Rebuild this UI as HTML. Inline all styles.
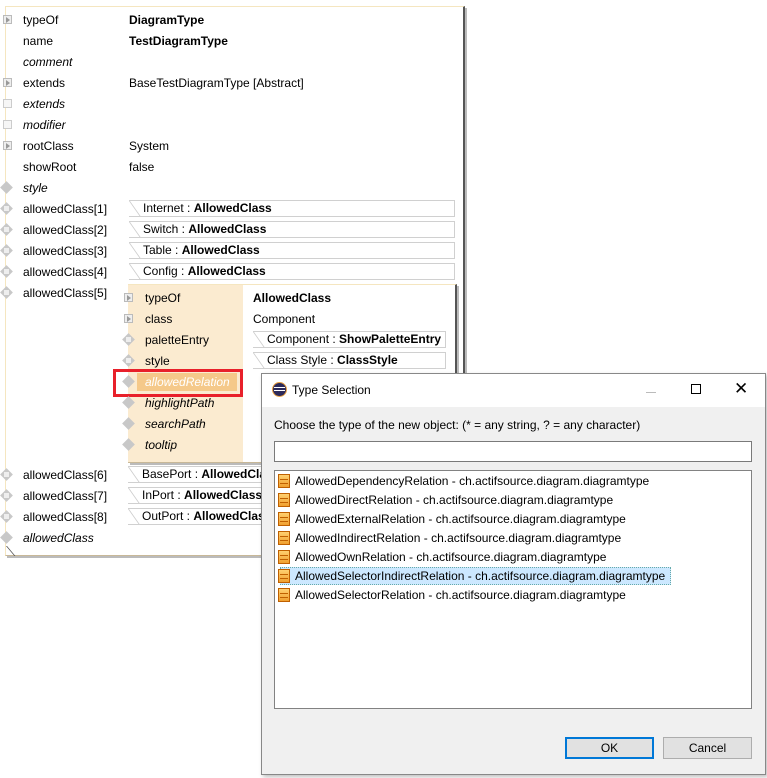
<!DOCTYPE html>
<html><head><meta charset="utf-8"><style>
*{margin:0;padding:0;box-sizing:border-box}
body{width:767px;height:778px;background:#fff;position:relative;overflow:hidden;font-family:"Liberation Sans",sans-serif;font-size:12px;color:#000}
.a{position:absolute;white-space:nowrap;line-height:16px}
.i{font-style:italic}
.b{font-weight:bold}
.ex{position:absolute;width:9px;height:9px;border:1px solid #bbb;background:#eee}
.ex:after{content:"";position:absolute;left:2px;top:1px;border-left:4px solid #999;border-top:3px solid transparent;border-bottom:3px solid transparent}
.sq{position:absolute;width:9px;height:9px;border:1px solid #ccc;background:#f6f6f6}
.dm{position:absolute;width:9px;height:9px;background:#c8c8c8;transform:rotate(45deg)}
.dp:after{content:"";position:absolute;left:2px;top:2px;width:5px;height:5px;background:#eee;transform:rotate(-45deg)}
.bx{position:absolute;height:17px;border:1px solid #d0d0d0;border-left:none;background:#fff;padding-left:14px;line-height:15px;white-space:nowrap;overflow:hidden}
.bx:before{content:"";position:absolute;left:0;top:0;width:10px;height:15px;border-left:1px solid #ccc;transform:skewX(35deg);transform-origin:top left}
.li{position:absolute;left:20px;height:18px;line-height:18px;white-space:nowrap}
.ci{position:absolute;left:-17px;top:2px;width:12px;height:14px;border:1px solid #c06000;background:linear-gradient(#ffd070,#f0a030)}
.ci:before{content:"";position:absolute;left:1px;top:4px;width:8px;height:1px;background:#c06000;box-shadow:0 4px 0 #c06000}
</style></head><body>
<!-- main panel -->
<div style="position:absolute;left:5px;top:6px;width:460px;height:550px;border:1px solid #f5e6c0;border-right:2px solid #555;border-bottom:1px solid #c8b898;box-shadow:2px 2px 0 #bbb"></div>
<div style="position:absolute;left:6px;top:546px;width:10px;height:10px;border-left:1px solid #555;transform:skewX(40deg);transform-origin:top left"></div>

<div class="ex" style="left:3px;top:15px"></div><div class="a" style="left:23px;top:12px">typeOf</div><div class="a b" style="left:129px;top:12px">DiagramType</div>
<div class="a" style="left:23px;top:33px">name</div><div class="a b" style="left:129px;top:33px">TestDiagramType</div>
<div class="a i" style="left:23px;top:54px">comment</div>
<div class="ex" style="left:3px;top:78px"></div><div class="a" style="left:23px;top:75px">extends</div><div class="a" style="left:129px;top:75px">BaseTestDiagramType [Abstract]</div>
<div class="sq" style="left:3px;top:99px"></div><div class="a i" style="left:23px;top:96px">extends</div>
<div class="sq" style="left:3px;top:120px"></div><div class="a i" style="left:23px;top:117px">modifier</div>
<div class="ex" style="left:3px;top:141px"></div><div class="a" style="left:23px;top:138px">rootClass</div><div class="a" style="left:129px;top:138px">System</div>
<div class="a" style="left:23px;top:159px">showRoot</div><div class="a" style="left:129px;top:159px">false</div>
<div class="dm" style="left:2px;top:183px"></div><div class="a i" style="left:23px;top:180px">style</div>

<div class="dm dp" style="left:2px;top:204px"></div><div class="a" style="left:23px;top:201px">allowedClass[1]</div><div class="bx" style="left:129px;top:200px;width:326px">Internet : <b>AllowedClass</b></div>
<div class="dm dp" style="left:2px;top:225px"></div><div class="a" style="left:23px;top:222px">allowedClass[2]</div><div class="bx" style="left:129px;top:221px;width:326px">Switch : <b>AllowedClass</b></div>
<div class="dm dp" style="left:2px;top:246px"></div><div class="a" style="left:23px;top:243px">allowedClass[3]</div><div class="bx" style="left:129px;top:242px;width:326px">Table : <b>AllowedClass</b></div>
<div class="dm dp" style="left:2px;top:267px"></div><div class="a" style="left:23px;top:264px">allowedClass[4]</div><div class="bx" style="left:129px;top:263px;width:326px">Config : <b>AllowedClass</b></div>
<div class="dm dp" style="left:2px;top:288px"></div><div class="a" style="left:23px;top:285px">allowedClass[5]</div>

<!-- nested panel -->
<div style="position:absolute;left:128px;top:284px;width:329px;height:179px;background:#fff;border-top:1px solid #f5e6c0;border-right:2px solid #555;border-bottom:1px solid #c8b898;box-shadow:2px 2px 0 #bbb"></div>
<div style="position:absolute;left:128px;top:285px;width:115px;height:177px;background:#fbebd0"></div>
<div class="ex" style="left:124px;top:293px"></div><div class="a" style="left:145px;top:290px">typeOf</div><div class="a b" style="left:253px;top:290px">AllowedClass</div>
<div class="ex" style="left:124px;top:314px"></div><div class="a" style="left:145px;top:311px">class</div><div class="a" style="left:253px;top:311px">Component</div>
<div class="dm dp" style="left:124px;top:335px"></div><div class="a" style="left:145px;top:332px">paletteEntry</div><div class="bx" style="left:253px;top:331px;width:193px">Component : <b>ShowPaletteEntry</b></div>
<div class="dm dp" style="left:124px;top:356px"></div><div class="a" style="left:145px;top:353px">style</div><div class="bx" style="left:253px;top:352px;width:193px">Class Style : <b>ClassStyle</b></div>
<div style="position:absolute;left:137px;top:373px;width:100px;height:18px;background:#f5c98a"></div>
<div class="dm" style="left:124px;top:377px"></div><div class="a i" style="left:145px;top:374px;color:#fff">allowedRelation</div>
<div style="position:absolute;left:113px;top:369px;width:130px;height:28px;border:3px solid #e8202a"></div>
<div class="dm" style="left:124px;top:398px"></div><div class="a i" style="left:145px;top:395px">highlightPath</div>
<div class="dm" style="left:124px;top:419px"></div><div class="a i" style="left:145px;top:416px">searchPath</div>
<div class="dm" style="left:124px;top:440px"></div><div class="a i" style="left:145px;top:437px">tooltip</div>

<div class="dm dp" style="left:2px;top:470px"></div><div class="a" style="left:23px;top:467px">allowedClass[6]</div><div class="bx" style="left:128px;top:466px;width:150px">BasePort : <b>AllowedClass</b></div>
<div class="dm dp" style="left:2px;top:491px"></div><div class="a" style="left:23px;top:488px">allowedClass[7]</div><div class="bx" style="left:128px;top:487px;width:150px">InPort : <b>AllowedClass</b></div>
<div class="dm dp" style="left:2px;top:512px"></div><div class="a" style="left:23px;top:509px">allowedClass[8]</div><div class="bx" style="left:128px;top:508px;width:150px">OutPort : <b>AllowedClass</b></div>
<div class="dm" style="left:2px;top:533px"></div><div class="a i" style="left:23px;top:530px">allowedClass</div>

<!-- dialog -->
<div style="position:absolute;left:261px;top:373px;width:505px;height:402px;background:#f0f0f0;border:1px solid #888;box-shadow:2px 2px 4px rgba(0,0,0,.25)">
 <div style="position:absolute;left:0;top:0;width:503px;height:33px;background:#fff"></div>
 <div style="position:absolute;left:11px;top:9px;width:13px;height:13px;border-radius:50%;background:#2c2a5a;box-shadow:0 0 0 1px #e8a040"></div>
 <div style="position:absolute;left:12px;top:13px;width:11px;height:1px;background:#fff;box-shadow:0 3px 0 #fff"></div>
 <div class="a" style="left:30px;top:8px">Type Selection</div>
 <div style="position:absolute;left:384px;top:18px;width:10px;height:1px;background:#bbb"></div>
 <div style="position:absolute;left:429px;top:10px;width:10px;height:10px;border:1px solid #000"></div>
 <div class="a" style="left:472px;top:5px;font-size:17px;line-height:20px">✕</div>
 <div class="a" style="left:12px;top:43px">Choose the type of the new object: (* = any string, ? = any character)</div>
 <div style="position:absolute;left:12px;top:67px;width:478px;height:21px;background:#fff;border:1px solid #7a7a7a"></div>
 <div style="position:absolute;left:12px;top:96px;width:478px;height:239px;background:#fff;border:1px solid #828282">
  <div style="position:absolute;left:5px;top:96px;width:391px;height:18px;background:#cce8ff;border:1px dotted #6aa"></div>
  <div class="li" style="top:1px"><span class="ci"></span>AllowedDependencyRelation - ch.actifsource.diagram.diagramtype</div>
  <div class="li" style="top:20px"><span class="ci"></span>AllowedDirectRelation - ch.actifsource.diagram.diagramtype</div>
  <div class="li" style="top:39px"><span class="ci"></span>AllowedExternalRelation - ch.actifsource.diagram.diagramtype</div>
  <div class="li" style="top:58px"><span class="ci"></span>AllowedIndirectRelation - ch.actifsource.diagram.diagramtype</div>
  <div class="li" style="top:77px"><span class="ci"></span>AllowedOwnRelation - ch.actifsource.diagram.diagramtype</div>
  <div class="li" style="top:96px"><span class="ci"></span>AllowedSelectorIndirectRelation - ch.actifsource.diagram.diagramtype</div>
  <div class="li" style="top:115px"><span class="ci"></span>AllowedSelectorRelation - ch.actifsource.diagram.diagramtype</div>
 </div>
 <div style="position:absolute;left:303px;top:363px;width:89px;height:22px;background:#e1e1e1;border:2px solid #0078d7;text-align:center;line-height:18px">OK</div>
 <div style="position:absolute;left:401px;top:363px;width:89px;height:22px;background:#e1e1e1;border:1px solid #adadad;text-align:center;line-height:20px">Cancel</div>
</div>
</body></html>
